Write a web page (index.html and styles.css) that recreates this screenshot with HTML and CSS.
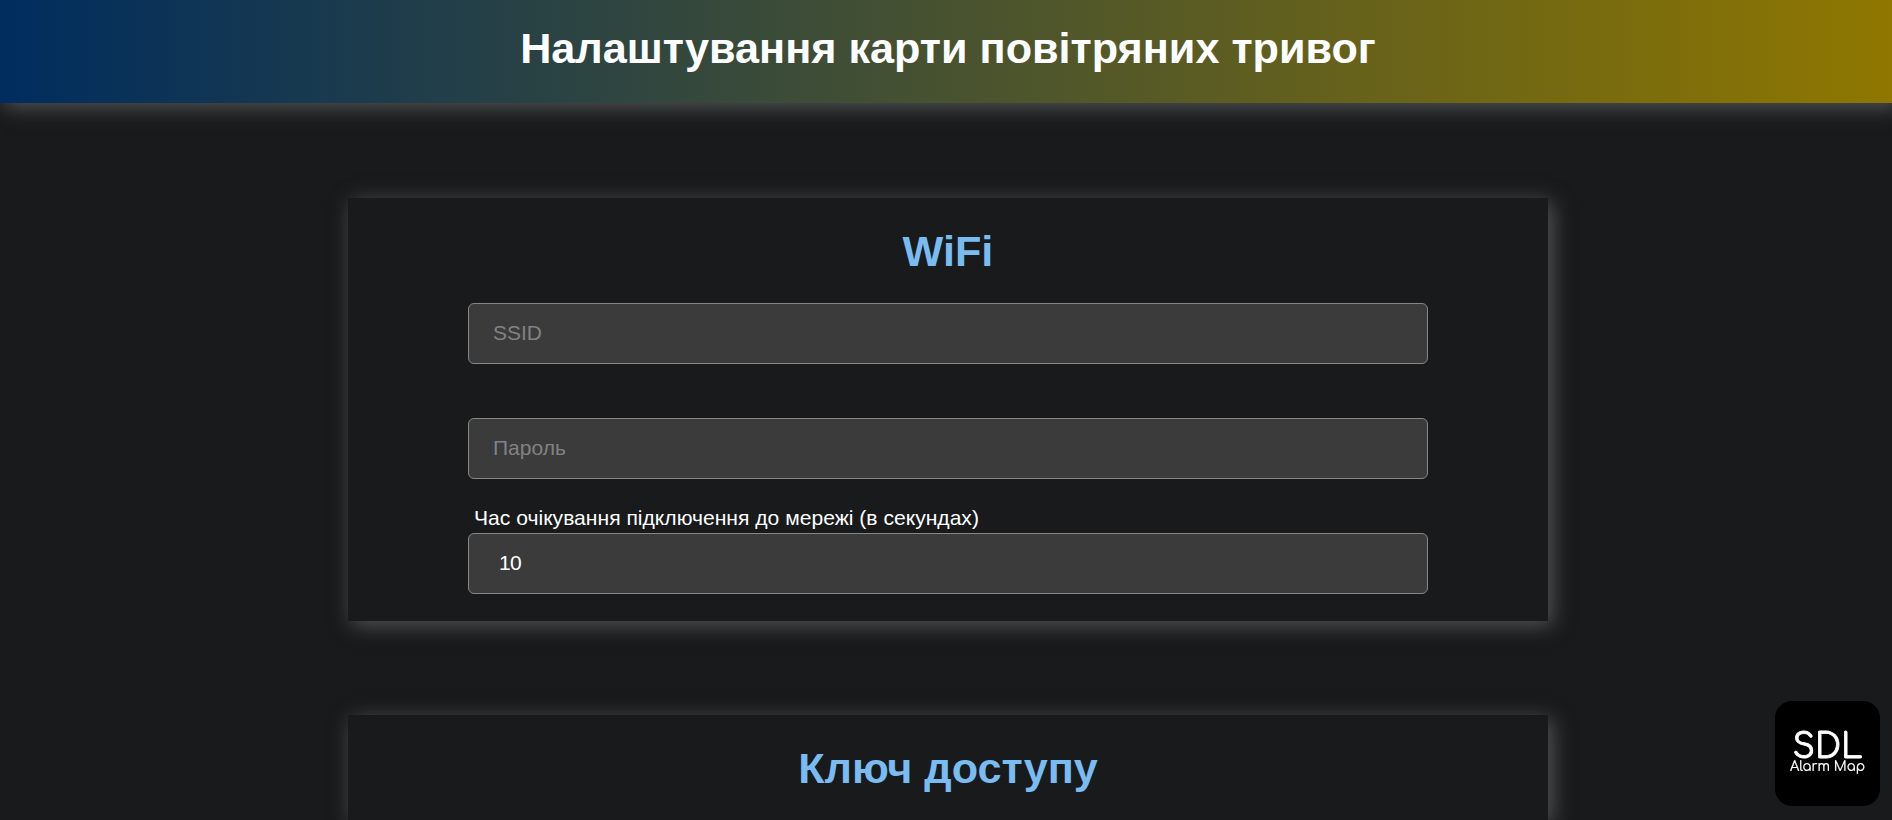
FILE: index.html
```html
<!DOCTYPE html>
<html lang="uk">
<head>
<meta charset="utf-8">
<title>Налаштування карти повітряних тривог</title>
<link rel="stylesheet" href="styles.css">
</head>
<body>
<div class="page">
  <header class="header"><h1 class="title">Налаштування карти повітряних тривог</h1></header>
  <main class="content">
    <section class="card">
      <h2 class="card-title">WiFi</h2>
      <div class="field"><input class="input" type="text" placeholder="SSID" aria-label="SSID"></div>
      <div class="field"><input class="input" type="text" placeholder="Пароль" aria-label="Пароль"></div>
      <div class="field">
        <label class="label" for="timeout">Час очікування підключення до мережі (в секундах)</label>
        <input class="input input-value" id="timeout" type="text" value="10">
      </div>
    </section>
    <section class="card card-last">
      <h2 class="card-title">Ключ доступу</h2>
    </section>
  </main>
</div>
<svg class="logo" viewBox="0 0 105 105" role="img" aria-label="SDL Alarm Map">
  <rect width="105" height="105" rx="17"/>
  <text class="logo-main" x="17.5" y="57" textLength="70" lengthAdjust="spacingAndGlyphs">SDL</text>
  <text class="logo-sub" x="15" y="69.5" textLength="75" lengthAdjust="spacingAndGlyphs">Alarm Map</text>
</svg>
</body>
</html>
```
FILE: styles.css
```css
* { box-sizing: border-box; }
html, body { height: 100%; overflow: hidden; }
body {
  margin: 0;
  background: #181a1b;
  color: #fff;
  font-family: "Liberation Sans", Arial, sans-serif;
}
.page {
  display: flex;
  flex-direction: column;
  width: 1896px;
  height: 100%;
  overflow: hidden;
}
.header {
  flex: none;
  height: 103px;
  padding-top: 23px;
  background: linear-gradient(90deg, #002d5f, #8f7700);
  box-shadow: 4px 4px 20px #555758;
  text-align: center;
}
.title, .card-title { margin: 0; font-size: 43.2px; line-height: 50px; font-weight: 700; }
.content {
  flex: 1;
  display: flex;
  flex-direction: column;
  align-items: center;
  gap: 94px;
  padding-top: 95px;
}
.card {
  flex: none;
  width: 1200px;
  height: 423px;
  padding: 28px 120px 0;
  background: #181a1b;
  box-shadow: 4px 4px 20px #555758;
}
.card-last { flex: 1; height: auto; }
.card-title { color: #7abcf0; text-align: center; }
.field {
  display: flex;
  flex-direction: column;
  justify-content: flex-end;
  height: 115px;
}
.card-title + .field { height: 88px; }
.label { padding-left: 6px; font-size: 21.1px; line-height: 24px; margin-bottom: 3px; }
.input {
  width: 100%;
  height: 61px;
  padding: 0 24px 2px;
  border: 1px solid #868686;
  border-radius: 6px;
  background: #3b3b3b;
  color: #fff;
  font: 21px "Liberation Sans", Arial, sans-serif;
}
.input-value { padding-left: 30px; letter-spacing: -0.8px; }
.input::placeholder { color: #828282; }
.logo { position: fixed; right: 12px; bottom: 14px; width: 105px; height: 105px; }
.logo text { fill: #fff; font-family: Comfortaa, Quicksand, Lato, sans-serif; stroke: #fff; stroke-linejoin: round; }
.logo-main { font-size: 34px; stroke-width: 0.8px; }
.logo-sub { font-size: 13.5px; stroke-width: 0.2px; }
```
